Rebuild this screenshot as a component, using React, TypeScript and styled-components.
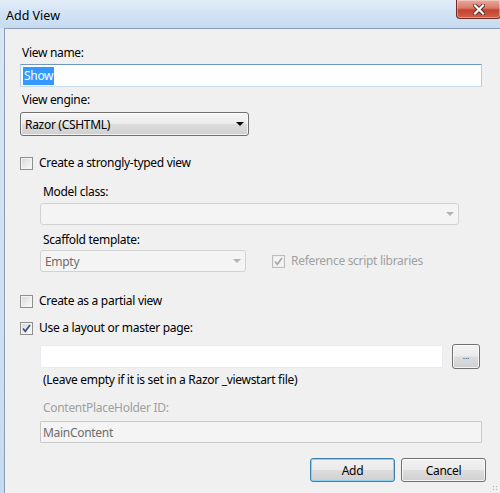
import styled, { createGlobalStyle } from 'styled-components';

const GlobalStyle = createGlobalStyle`
  html, body {
    margin: 0;
    padding: 0;
    overflow: hidden;
  }
  body {
    font-family: "Noto Sans", "Liberation Sans", sans-serif;
    font-size: 12px;
    letter-spacing: -0.3px;
    color: #000;
  }
`;

const Window = styled.div`
  width: 500px;
  height: 493px;
  display: flex;
  flex-direction: column;
  background: linear-gradient(180deg, #d9e7f6 0%, #c7dbf0 100%);
  position: relative;
  overflow: hidden;
`;

const TitleBar = styled.div`
  height: 28px;
  display: flex;
  justify-content: space-between;
  align-items: flex-start;
  background: linear-gradient(180deg, #e4eef9 0%, #d3e3f5 45%, #c6dbf1 100%);
`;

const Title = styled.div`
  padding: 8px 0 0 6px;
  font-size: 12.5px;
  line-height: 16px;
  letter-spacing: 0;
  color: #000;
`;

const CloseButton = styled.div`
  width: 43px;
  height: 18px;
  margin-right: -1px;
  display: flex;
  align-items: center;
  justify-content: center;
  border: 1px solid #6e2a24;
  border-top: none;
  border-radius: 0 0 4px 4px;
  background: linear-gradient(180deg, #e9a99c 0%, #d97a68 45%, #c4432f 55%, #d0624c 100%);
  box-shadow: inset 0 0 0 1px rgba(255, 255, 255, 0.35);
`;

const Frame = styled.div`
  flex: 1;
  display: flex;
  padding-left: 4px;
`;

const Body = styled.div`
  flex: 1;
  display: flex;
  flex-direction: column;
  background: #f0f0f0;
  border-left: 1px solid #8b9db3;
  border-top: 1px solid #8b9db3;
  padding: 0 18px 0 15px;
`;

const Label = styled.div<{ $mt: number; $indent?: boolean; $disabled?: boolean }>`
  margin-top: ${(p) => p.$mt}px;
  padding-left: ${(p) => (p.$indent ? 23 : 2)}px;
  line-height: 16px;
  height: 16px;
  color: ${(p) => (p.$disabled ? '#a0a0a0' : '#000')};
  white-space: nowrap;
`;

const TextBox = styled.div<{ $mt?: number; $indent?: boolean; $focused?: boolean; $disabled?: boolean }>`
  margin-top: ${(p) => p.$mt ?? 0}px;
  margin-left: ${(p) => (p.$indent ? 20 : 0)}px;
  height: ${(p) => (p.$disabled ? 22 : 23)}px;
  box-sizing: border-box;
  display: flex;
  align-items: center;
  padding-left: 2px;
  background: ${(p) => (p.$disabled ? '#f4f4f4' : '#fff')};
  border: 1px solid ${(p) => (p.$disabled ? '#c9c9c9' : '#e3e9ef')};
  border-color: ${(p) =>
    p.$focused ? '#6d98c0 #b4cde6 #c6dcef #b4cde6' : p.$disabled ? '#c9c9c9' : '#e8ecf0'};
  border-radius: 1px;
  color: ${(p) => (p.$disabled ? '#6d6d6d' : '#000')};
  flex: 1;
`;

const Selected = styled.span`
  background: #3399ff;
  color: #fff;
  line-height: 18px;
  padding: 0 1px;
`;

const Combo = styled.div<{ $mt: number; $width: number; $indent?: boolean; $disabled?: boolean }>`
  margin-top: ${(p) => p.$mt}px;
  margin-left: ${(p) => (p.$indent ? 20 : 0)}px;
  width: ${(p) => p.$width}px;
  height: ${(p) => (p.$disabled ? 22 : 24)}px;
  box-sizing: border-box;
  display: flex;
  align-items: center;
  justify-content: space-between;
  padding: 0 4px 0 4px;
  border: 1px solid ${(p) => (p.$disabled ? '#d2d2d2' : '#707070')};
  border-radius: 3px;
  color: ${(p) => (p.$disabled ? '#6d6d6d' : '#000')};
  background: ${(p) =>
    p.$disabled
      ? '#f4f4f4'
      : 'linear-gradient(180deg, #f6f6f6 0%, #ebebeb 48%, #dddddd 52%, #d0d0d0 100%)'};
  box-shadow: ${(p) => (p.$disabled ? 'none' : 'inset 0 0 0 1px rgba(255,255,255,0.7)')};
`;

const Arrow = styled.span<{ $disabled?: boolean }>`
  width: 0;
  height: 0;
  border-left: 4px solid transparent;
  border-right: 4px solid transparent;
  border-top: 4px solid ${(p) => (p.$disabled ? '#b3b3b3' : '#000')};
`;

const CheckRow = styled.div<{ $mt: number; $disabled?: boolean }>`
  margin-top: ${(p) => p.$mt}px;
  display: flex;
  align-items: center;
  gap: 6px;
  line-height: 16px;
  color: ${(p) => (p.$disabled ? '#a0a0a0' : '#000')};
  white-space: nowrap;
`;

const CheckBox = styled.span<{ $disabled?: boolean }>`
  width: 13px;
  height: 13px;
  box-sizing: border-box;
  display: flex;
  align-items: center;
  justify-content: center;
  border: 1px solid ${(p) => (p.$disabled ? '#bcbcbc' : '#8e8f8f')};
  background: ${(p) =>
    p.$disabled ? '#f4f4f4' : 'linear-gradient(135deg, #d6d6d6 0%, #eeeeee 60%, #fbfbfb 100%)'};
  box-shadow: inset 0 0 0 1px ${(p) => (p.$disabled ? '#ececec' : '#f4f4f4')};
`;

const Row = styled.div<{ $mt: number }>`
  margin-top: ${(p) => p.$mt}px;
  display: flex;
  align-items: center;
`;

const RowCheck = styled(CheckRow)`
  margin-left: 26px;
  margin-top: 0;
`;

const FieldIndent = styled.div`
  flex: 1;
  display: flex;
  margin-left: 20px;
`;

const BrowseButton = styled.div`
  width: 28px;
  height: 25px;
  margin: 0 2px 0 9px;
  box-sizing: border-box;
  display: flex;
  align-items: center;
  justify-content: center;
  border: 1px solid #707070;
  border-radius: 3px;
  color: #444;
  font-size: 9px;
  padding-bottom: 3px;
  background: linear-gradient(180deg, #f3f3f3 0%, #ebebeb 48%, #dddddd 52%, #cfcfcf 100%);
  box-shadow: inset 0 0 0 1px rgba(255, 255, 255, 0.75);
`;

const Buttons = styled.div`
  margin-top: 15px;
  margin-right: -4px;
  display: flex;
  justify-content: flex-end;
  gap: 6px;
`;

const Button = styled.div<{ $default?: boolean }>`
  width: 85px;
  height: 24px;
  box-sizing: border-box;
  display: flex;
  align-items: center;
  justify-content: center;
  border: 1px solid ${(p) => (p.$default ? '#3c7fb1' : '#707070')};
  border-radius: 3px;
  background: linear-gradient(180deg, #f2f2f2 0%, #ebebeb 48%, #dddddd 52%, #cfcfcf 100%);
  box-shadow: inset 0 0 0 1px ${(p) => (p.$default ? '#8fd0f0' : 'rgba(255,255,255,0.75)')};
`;

const Grip = styled.div`
  position: absolute;
  right: 2px;
  bottom: 2px;
  width: 6px;
  height: 6px;
  background: radial-gradient(circle, #b0b0b0 0.8px, transparent 1px) 0 0 / 3px 3px;
`;

const Check = ({ color }: { color: string }) => (
  <svg width="11" height="11" viewBox="0 0 11 11">
    <path d="M2 5.5 L4.3 8.3 L9 2" fill="none" stroke={color} strokeWidth="1.7" />
  </svg>
);

const App = () => {
  return (
    <>
      <GlobalStyle />
      <Window>
        <TitleBar>
          <Title>Add View</Title>
          <CloseButton>
            <svg width="12" height="11" viewBox="0 0 12 11">
              <path d="M2 1.5 L10 9.5 M10 1.5 L2 9.5" stroke="#5a2620" strokeWidth="4" strokeLinecap="square" />
              <path d="M2 1.5 L10 9.5 M10 1.5 L2 9.5" stroke="#ffffff" strokeWidth="2.2" strokeLinecap="square" />
            </svg>
          </CloseButton>
        </TitleBar>
        <Frame>
          <Body>
            <Label $mt={16}>View name:</Label>
            <Row $mt={3}>
              <TextBox $focused>
                <Selected>Show</Selected>
              </TextBox>
            </Row>
            <Label $mt={5}>View engine:</Label>
            <Combo $mt={4} $width={229}>
              Razor (CSHTML)
              <Arrow />
            </Combo>

            <CheckRow $mt={19}>
              <CheckBox />
              Create a strongly-typed view
            </CheckRow>
            <Label $mt={13} $indent>Model class:</Label>
            <Combo $mt={3} $width={419} $indent $disabled>
              <span />
              <Arrow $disabled />
            </Combo>
            <Label $mt={7} $indent>Scaffold template:</Label>
            <Row $mt={2}>
              <Combo $mt={0} $width={206} $indent $disabled>
                Empty
                <Arrow $disabled />
              </Combo>
              <RowCheck $mt={0} $disabled>
                <CheckBox $disabled>
                  <Check color="#a8a8a8" />
                </CheckBox>
                Reference script libraries
              </RowCheck>
            </Row>

            <CheckRow $mt={21}>
              <CheckBox />
              Create as a partial view
            </CheckRow>
            <CheckRow $mt={11}>
              <CheckBox>
                <Check color="#3d4f8a" />
              </CheckBox>
              Use a layout or master page:
            </CheckRow>
            <Row $mt={8}>
              <FieldIndent>
                <TextBox />
              </FieldIndent>
              <BrowseButton>...</BrowseButton>
            </Row>
            <Label $mt={3} $indent>(Leave empty if it is set in a Razor _viewstart file)</Label>
            <Label $mt={12} $indent $disabled>ContentPlaceHolder ID:</Label>
            <Row $mt={5}>
              <FieldIndent>
                <TextBox $disabled>MainContent</TextBox>
              </FieldIndent>
            </Row>
            <Buttons>
              <Button $default>Add</Button>
              <Button>Cancel</Button>
            </Buttons>
          </Body>
        </Frame>
        <Grip />
      </Window>
    </>
  );
};

export default App;
